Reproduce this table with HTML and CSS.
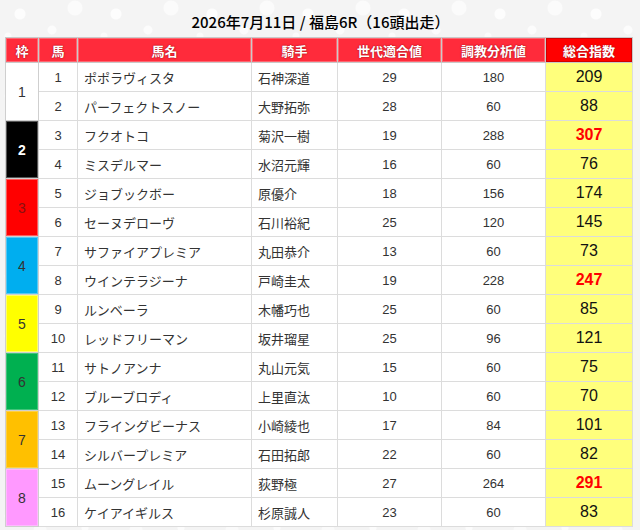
FILE: index.html
```html
<!DOCTYPE html>
<html lang="ja">
<head>
<meta charset="utf-8">
<link rel="stylesheet" href="styles.css">
</head>
<body>
<div class="page">
  <h1 class="title">2026年7月11日 / 福島6R（16頭出走）</h1>
  <table class="race">
    <colgroup>
      <col class="c-waku"><col class="c-uma"><col class="c-name"><col class="c-jockey"><col class="c-sedai"><col class="c-chokyo"><col class="c-total">
    </colgroup>
    <thead>
      <tr>
        <th>枠</th><th>馬</th><th>馬名</th><th>騎手</th><th>世代適合値</th><th>調教分析値</th><th class="th-total">総合指数</th>
      </tr>
    </thead>
    <tbody>
      <tr><td class="waku w1" rowspan="2">1</td><td class="num">1</td><td class="txt">ポポラヴィスタ</td><td class="txt">石神深道</td><td class="num">29</td><td class="num">180</td><td class="total">209</td></tr>
      <tr><td class="num">2</td><td class="txt">パーフェクトスノー</td><td class="txt">大野拓弥</td><td class="num">28</td><td class="num">60</td><td class="total">88</td></tr>
      <tr><td class="waku w2" rowspan="2">2</td><td class="num">3</td><td class="txt">フクオトコ</td><td class="txt">菊沢一樹</td><td class="num">19</td><td class="num">288</td><td class="total hi">307</td></tr>
      <tr><td class="num">4</td><td class="txt">ミスデルマー</td><td class="txt">水沼元輝</td><td class="num">16</td><td class="num">60</td><td class="total">76</td></tr>
      <tr><td class="waku w3" rowspan="2">3</td><td class="num">5</td><td class="txt">ジョブックボー</td><td class="txt">原優介</td><td class="num">18</td><td class="num">156</td><td class="total">174</td></tr>
      <tr><td class="num">6</td><td class="txt">セーヌデローヴ</td><td class="txt">石川裕紀</td><td class="num">25</td><td class="num">120</td><td class="total">145</td></tr>
      <tr><td class="waku w4" rowspan="2">4</td><td class="num">7</td><td class="txt">サファイアプレミア</td><td class="txt">丸田恭介</td><td class="num">13</td><td class="num">60</td><td class="total">73</td></tr>
      <tr><td class="num">8</td><td class="txt">ウインテラジーナ</td><td class="txt">戸崎圭太</td><td class="num">19</td><td class="num">228</td><td class="total hi">247</td></tr>
      <tr><td class="waku w5" rowspan="2">5</td><td class="num">9</td><td class="txt">ルンベーラ</td><td class="txt">木幡巧也</td><td class="num">25</td><td class="num">60</td><td class="total">85</td></tr>
      <tr><td class="num">10</td><td class="txt">レッドフリーマン</td><td class="txt">坂井瑠星</td><td class="num">25</td><td class="num">96</td><td class="total">121</td></tr>
      <tr><td class="waku w6" rowspan="2">6</td><td class="num">11</td><td class="txt">サトノアンナ</td><td class="txt">丸山元気</td><td class="num">15</td><td class="num">60</td><td class="total">75</td></tr>
      <tr><td class="num">12</td><td class="txt">ブルーブロディ</td><td class="txt">上里直汰</td><td class="num">10</td><td class="num">60</td><td class="total">70</td></tr>
      <tr><td class="waku w7" rowspan="2">7</td><td class="num">13</td><td class="txt">フライングビーナス</td><td class="txt">小崎綾也</td><td class="num">17</td><td class="num">84</td><td class="total">101</td></tr>
      <tr><td class="num">14</td><td class="txt">シルバープレミア</td><td class="txt">石田拓郎</td><td class="num">22</td><td class="num">60</td><td class="total">82</td></tr>
      <tr><td class="waku w8" rowspan="2">8</td><td class="num">15</td><td class="txt">ムーングレイル</td><td class="txt">荻野極</td><td class="num">27</td><td class="num">264</td><td class="total hi">291</td></tr>
      <tr><td class="num">16</td><td class="txt">ケイアイギルス</td><td class="txt">杉原誠人</td><td class="num">23</td><td class="num">60</td><td class="total">83</td></tr>
    </tbody>
  </table>
</div>
</body>
</html>
```

FILE: styles.css
```css
html, body {
  margin: 0;
  padding: 0;
}
body {
  width: 640px;
  height: 530px;
  overflow: hidden;
  font-family: "Liberation Sans", "Noto Sans CJK JP", sans-serif;
  color: #333;
  background-color: #f4f4f4;
  background-image:
    radial-gradient(circle at 20px 14px, rgba(255,255,255,0.8) 0 5px, transparent 6px),
    radial-gradient(circle at 52px 30px, rgba(255,255,255,0.7) 0 4px, transparent 5px),
    radial-gradient(circle at 75px 8px, rgba(255,255,255,0.6) 0 7px, transparent 8px),
    radial-gradient(circle at 8px 36px, rgba(255,255,255,0.6) 0 3px, transparent 4px),
    radial-gradient(circle at 40px 50px, rgba(255,255,255,0.5) 0 6px, transparent 7px),
    radial-gradient(circle at 85px 48px, rgba(255,255,255,0.7) 0 3px, transparent 4px);
  background-size: 96px 60px;
}
.page {
  padding: 0 8px 0 5px;
}
.title {
  margin: 0;
  height: 37px;
  line-height: 44px;
  font-family: "Noto Sans CJK JP", sans-serif;
  font-size: 15px;
  font-weight: 500;
  color: #000;
  text-align: center;
  padding-left: 4px;
}
.race {
  width: 627px;
  table-layout: fixed;
  border-collapse: collapse;
  background: #fff;
  border: 1px solid #bdbdbd;
  font-size: 13px;
}
.c-waku { width: 33px; }
.c-uma { width: 39px; }
.c-name { width: 174px; }
.c-jockey { width: 86px; }
.c-sedai { width: 104px; }
.c-chokyo { width: 104px; }
.c-total { width: 87px; }

.race th {
  height: 24px;
  padding: 0;
  background: #ff2b3b;
  color: #fff;
  font-family: "Noto Sans CJK JP", sans-serif;
  font-weight: 700;
  font-size: 13px;
  text-shadow: 0 0 2px #b0101c, 0 0 1px #b0101c;
  border: 1px solid #c9c9c9;
  box-shadow: inset 0 0 0 1px #ff6670;
}
.race th.th-total {
  background: #ff0000;
  box-shadow: inset 0 0 0 1px #d00000;
}
.race td {
  height: 28px;
  padding: 0;
  border: 1px solid #dcdcdc;
  line-height: 1;
}
.race td.num {
  text-align: center;
  color: #333;
  font-size: 13px;
}
.race td.txt {
  text-align: left;
  padding-left: 6px;
  color: #333;
  white-space: nowrap;
  overflow: hidden;
  font-family: "Noto Sans CJK JP", sans-serif;
  font-size: 13px;
}
.race td.total {
  text-align: center;
  background: #ffff7c;
  color: #111;
  font-size: 16px;
}
.race td.total.hi {
  color: #ff0000;
  font-weight: 700;
}
.race td.waku {
  text-align: center;
  font-size: 14px;
  color: #333;
  border-color: #cfcfcf;
}
.w1 { background: #ffffff; }
.w2 { background: #000000; color: #fff !important; font-weight: 700; box-shadow: inset 0 0 0 1px #555; }
.w3 { background: #ff0000; color: #8a1010 !important; box-shadow: inset 0 0 0 1px #ff5a5a; }
.w4 { background: #00aeef; box-shadow: inset 0 0 0 1px #55c8f4; }
.w5 { background: #ffff00; box-shadow: inset 0 0 0 1px #ffff66; }
.w6 { background: #00b050; box-shadow: inset 0 0 0 1px #40c47a; }
.w7 { background: #ffc000; box-shadow: inset 0 0 0 1px #ffd040; }
.w8 { background: #ff99ff; box-shadow: inset 0 0 0 1px #ffb8ff; }
```
